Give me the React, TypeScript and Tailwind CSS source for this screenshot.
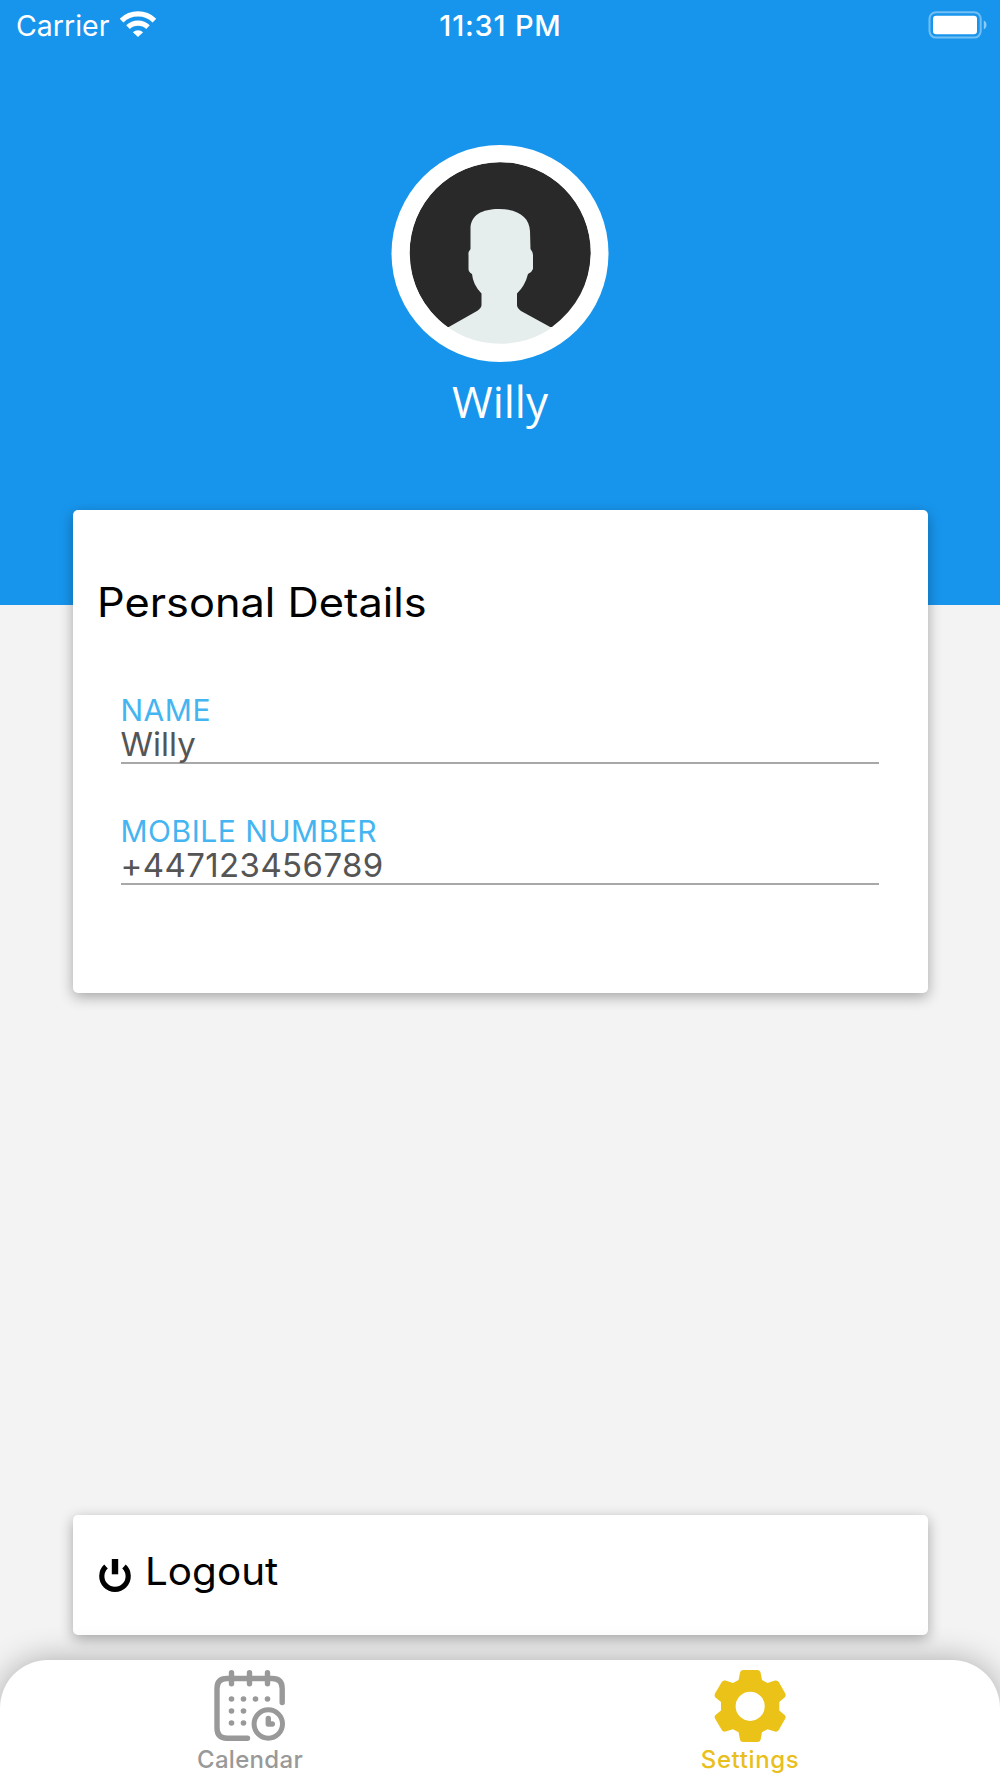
import type { ReactNode } from "react";
import { clsx } from "clsx";

const details = [
  { label: "NAME", value: "Willy", tracking: "tracking-normal" },
  { label: "MOBILE NUMBER", value: "+447123456789", tracking: "tracking-[0.4px]" },
];

function WifiIcon() {
  return (
    <svg viewBox="0 0 36 27" className="-mt-[5px] h-[27px] w-9" fill="none" stroke="#fff" strokeWidth="5.2">
      <path d="M1.6 10.6a23.6 23.6 0 0 1 32.8 0" />
      <path d="M8 17.1a14.5 14.5 0 0 1 20 0" />
      <path d="M12.9 22.2a7.4 7.4 0 0 1 10.2 0L18 27z" fill="#fff" stroke="none" />
    </svg>
  );
}

function BatteryIcon() {
  return (
    <svg viewBox="0 0 60 28" className="-mt-[3px] h-7 w-[60px]">
      <rect x="1.5" y="1.2" width="51.2" height="25.4" rx="6.5" fill="none" stroke="#fff" strokeOpacity=".4" strokeWidth="2" />
      <rect x="5" y="4.8" width="44" height="18.4" rx="3.2" fill="#fff" />
      <path d="M55.8 9.5c1.8.8 2.7 2.5 2.7 4.4s-.9 3.6-2.7 4.4z" fill="#fff" fillOpacity=".5" />
    </svg>
  );
}

function Avatar() {
  return (
    <svg viewBox="0 0 218 218" className="size-[218px]">
      <defs>
        <clipPath id="face">
          <circle cx="109.2" cy="108" r="90.8" />
        </clipPath>
      </defs>
      <circle cx="109" cy="108.5" r="108.5" fill="#fff" />
      <path d="M18.7 107.5A90.5 90.5 0 0 1 199.7 107.5Q199 153 161 182H56Q19 153 18.7 107.5Z" fill="#292929" clipPath="url(#face)" />
      <path
        clipPath="url(#face)"
        fill="#e6eded"
        d="M79.5 84C79.5 70 91 64 108 64C127 64 138.5 72 139 86L139.5 104Q142 107 142 110V124Q141 127 137 129Q134 141 126 148.5V160Q126 163 130 166L161 183V218H56V183L86 166Q90.5 163 90.5 160V148.5Q82 140 81 129Q77.5 127 77.5 124V110Q77 107 79.5 104Z"
      />
    </svg>
  );
}

function PowerIcon() {
  return (
    <svg viewBox="0 0 32 33" className="h-[33px] w-8" fill="none" stroke="#000">
      <path d="M7 7.5A13.2 13.2 0 1 0 25 7.5" strokeWidth="5.2" />
      <path d="M16 0v15.3" strokeWidth="6.4" />
    </svg>
  );
}

function CalendarIcon() {
  const dots = [
    [17.5, 29], [29.5, 29], [41.5, 29], [53.5, 29],
    [17.5, 41], [29.5, 41],
    [17.5, 53], [29.5, 53],
  ];
  return (
    <svg viewBox="0 0 72 72" className="size-[72px]" fill="none" stroke="#999" strokeLinecap="round">
      <path d="M33.5 68.3H13Q3 68 3 58V18.5Q3 8.5 13 8.5H58Q68.2 8.5 68.2 18.5V32.5" strokeWidth="5.4" />
      <path d="M17.5 2.8v11M35.5 2.8v11M53.5 2.8v11" strokeWidth="5.4" />
      {dots.map(([x, y]) => (
        <circle key={`${x}-${y}`} cx={x} cy={y} r="2.8" fill="#999" stroke="none" />
      ))}
      <circle cx="54.3" cy="54" r="14.2" strokeWidth="5" />
      <path d="M54.3 48.5V54h4" strokeWidth="5.4" strokeLinejoin="round" />
    </svg>
  );
}

function GearIcon() {
  return (
    <svg viewBox="0 0 72 72" className="size-[72px]" fill="#ebc218">
      <path
        fillRule="evenodd"
        d="M29 0H43.5Q46 .2 46.6 2.5L48 10L53.5 13L61 10.6Q63.3 10 64.8 12L71.3 23.5Q72.3 25.8 70.6 27.6L65.3 32V40.5L70.6 45Q72.3 46.6 71.3 48.6L64.8 60Q63.3 62.2 61 61.6L53.5 59.2L48 62.3L46.6 69.8Q46 72 43.5 72H29Q26.5 72 26 69.8L24.6 62.3L19 59.2L11.4 61.6Q9 62.2 7.8 60L1 48.6Q0 46.6 1.5 45L7 40.5V32L1.5 27.6Q0 25.8 1 23.5L7.8 12Q9 10 11.4 10.6L19 13L24.6 10L26 2.5Q26.5 .2 29 0ZM36.2 21.7A14.6 14.6 0 1 0 36.2 50.9A14.6 14.6 0 1 0 36.2 21.7Z"
      />
    </svg>
  );
}

function Card({ className, children }: { className?: string; children: ReactNode }) {
  return (
    <section
      className={clsx(
        "ml-[72.5px] w-[855px] rounded-[5px] bg-white shadow-[0_4px_14px_rgba(0,0,0,0.32)]",
        className,
      )}
    >
      {children}
    </section>
  );
}

function Tab({ label, icon, className }: { label: string; icon: ReactNode; className: string }) {
  return (
    <button className={clsx("flex w-1/2 flex-col items-center pt-[10px] text-2xl font-medium", className)}>
      {icon}
      <span className="mt-0.5 leading-8">{label}</span>
    </button>
  );
}

export default function App() {
  return (
    <div className="flex h-[1778px] w-[1000px] flex-col overflow-hidden bg-[#f3f3f3] font-['Inter',sans-serif]">
      <header className="flex h-[605px] shrink-0 flex-col bg-[#1795ed] text-white">
        {/* Status bar */}
        <div className="grid h-[52px] grid-cols-3 items-center pr-[12px] pl-4">
          <div className="flex items-center gap-[11px]">
            <span className="text-[28.5px]">Carrier</span>
            <WifiIcon />
          </div>
          <span className="-ml-[3px] text-center text-[29px] font-medium tracking-[0.8px]">11:31 PM</span>
          <div className="flex justify-end">
            <BatteryIcon />
          </div>
        </div>
        <div className="flex flex-col items-center pt-[93px]">
          <Avatar />
          <h1 className="mt-[8px] font-['Open_Sans',sans-serif] text-[44px] leading-[60px]">Willy</h1>
        </div>
      </header>

      <Card className="-mt-[95px] h-[483px] shrink-0 px-6 pt-[66px]">
        <h2 className="origin-left scale-x-[1.07] text-[40.5px] leading-[54px] text-black">Personal Details</h2>
        <dl className="mr-[25px] ml-6 mt-[63px] flex flex-col gap-[50px]">
          {details.map(({ label, value, tracking }) => (
            <div key={label} className="flex h-[71px] flex-col border-b-2 border-[#a8a8a8]">
              <dt className="text-[30px] leading-[34px] tracking-[0.5px] text-[#45b5f1]">{label}</dt>
              <dd className={clsx("text-[33px] leading-[35px] text-[#555]", tracking)}>{value}</dd>
            </div>
          ))}
        </dl>
      </Card>

      <Card className="mt-auto mb-[25px] h-[120px] shrink-0">
        <button className="flex h-full w-full items-center gap-[14px] px-[26px] text-black">
          <PowerIcon />
          <span className="-mt-[6px] origin-left scale-x-[1.05] text-[38.5px]">Logout</span>
        </button>
      </Card>

      <nav className="flex h-[118px] shrink-0 rounded-t-[48px] bg-white shadow-[0_0_32px_rgba(0,0,0,0.3)]">
        <Tab label="Calendar" icon={<CalendarIcon />} className="tracking-[0.3px] text-[#999]" />
        <Tab label="Settings" icon={<GearIcon />} className="tracking-[0.6px] text-[#e9bf20]" />
      </nav>
    </div>
  );
}
